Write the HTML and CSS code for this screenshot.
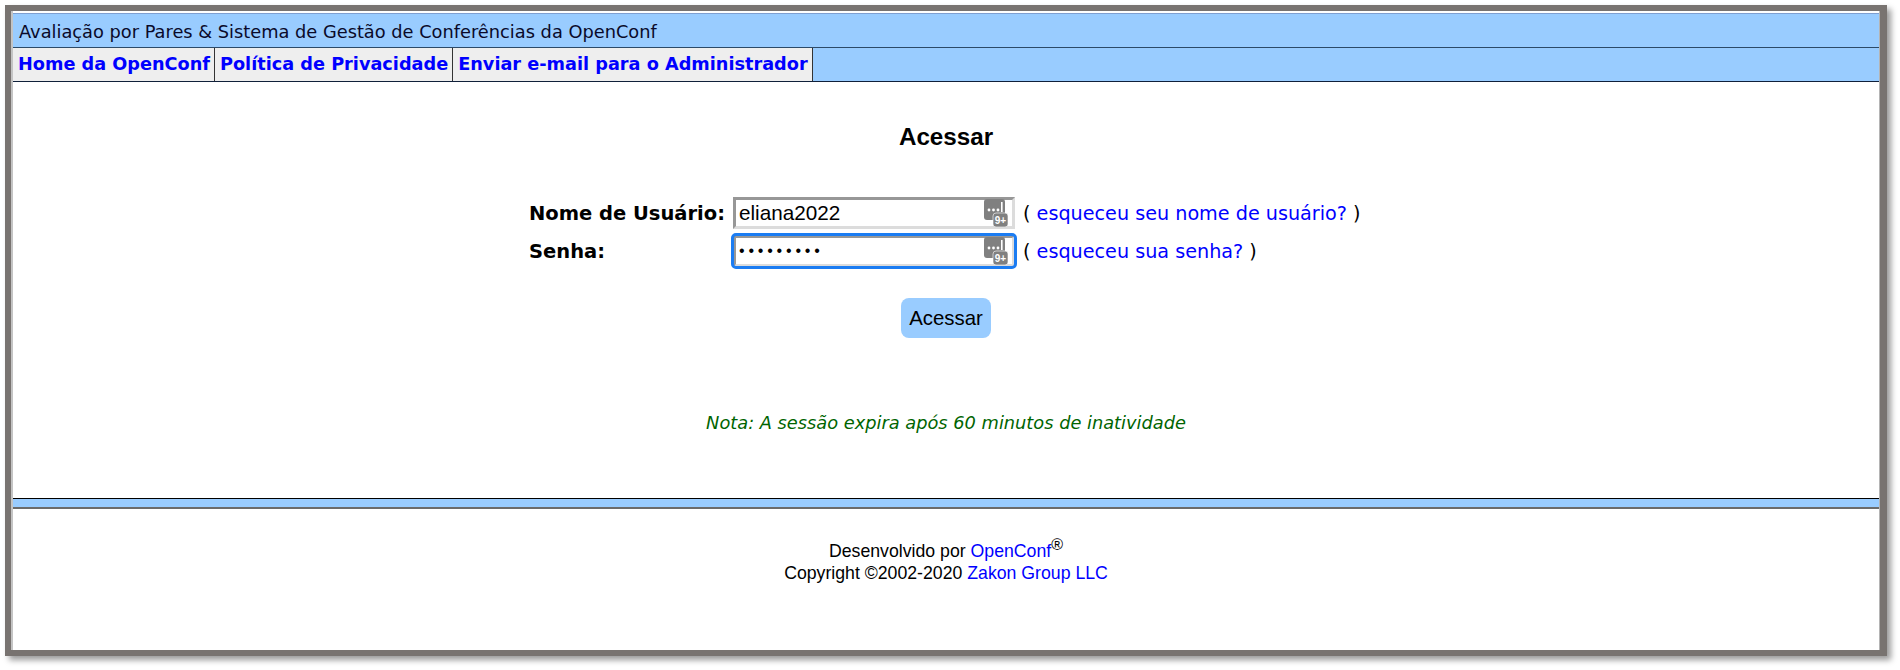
FILE: index.html
```html
<!DOCTYPE html>
<html lang="pt">
<head>
    <meta charset="UTF-8">
    <title>Avaliação por Pares &amp; Sistema de Gestão de Conferências da OpenConf</title>
    <link rel="stylesheet" href="styles.css">
</head>
<body>

<div class="window">
    <div class="site-title">Avaliação por Pares &amp; Sistema de Gestão de Conferências da OpenConf</div>
    <div class="site-nav">
        <a class="nav-item" href="#">Home da OpenConf</a>
        <a class="nav-item" href="#">Política de Privacidade</a>
        <a class="nav-item" href="#">Enviar e-mail para o Administrador</a>
    </div>

    <div class="content">
        <h1>Acessar</h1>
        <form class="login-form">
            <label class="field-label" for="user">Nome de Usuário:</label>
            <div class="input-box">
                <input id="user" class="text-input" type="text" value="eliana2022">
                <svg class="pass-icon" viewBox="0 0 24 28">
                    <rect x="0" y="0" width="21" height="21" rx="3" fill="#808080"/>
                    <circle cx="5" cy="11" r="1.4" fill="#fff"/>
                    <circle cx="9.5" cy="11" r="1.4" fill="#fff"/>
                    <circle cx="14" cy="11" r="1.4" fill="#fff"/>
                    <rect x="17" y="3" width="1.6" height="10" fill="#fff"/>
                    <rect x="9" y="14" width="15" height="14" rx="3" fill="#808080" stroke="#fff" stroke-width="0.6"/>
                    <text x="16.5" y="25" font-family="Liberation Sans, sans-serif" font-size="10" font-weight="700" fill="#fff" text-anchor="middle">9+</text>
                </svg>
            </div>
            <div class="field-note">( <a href="#">esqueceu seu nome de usuário?</a> )</div>

            <label class="field-label" for="pass">Senha:</label>
            <div class="input-box focused">
                <input id="pass" class="text-input password" type="password" value="abcdefghi">
                <svg class="pass-icon" viewBox="0 0 24 28">
                    <rect x="0" y="0" width="21" height="21" rx="3" fill="#808080"/>
                    <circle cx="5" cy="11" r="1.4" fill="#fff"/>
                    <circle cx="9.5" cy="11" r="1.4" fill="#fff"/>
                    <circle cx="14" cy="11" r="1.4" fill="#fff"/>
                    <rect x="17" y="3" width="1.6" height="10" fill="#fff"/>
                    <rect x="9" y="14" width="15" height="14" rx="3" fill="#808080" stroke="#fff" stroke-width="0.6"/>
                    <text x="16.5" y="25" font-family="Liberation Sans, sans-serif" font-size="10" font-weight="700" fill="#fff" text-anchor="middle">9+</text>
                </svg>
            </div>
            <div class="field-note">( <a href="#">esqueceu sua senha?</a> )</div>
        </form>
        <div class="submit-row"><button class="submit" type="button">Acessar</button></div>
        <p class="note">Nota: A sessão expira após 60 minutos de inatividade</p>
    </div>

    <div class="footer-bar"></div>
    <div class="footer">
        Desenvolvido por <a href="#">OpenConf</a><sup>®</sup><br>
        Copyright ©2002-2020 <a href="#">Zakon Group LLC</a>
    </div>
</div>

</body>
</html>
```

FILE: styles.css
```css
html, body {
    margin: 0;
    padding: 0;
    background-color: #fff;
}

body {
    height: 670px;
    overflow: hidden;
    font-family: "DejaVu Sans", sans-serif;
    font-size: 16px;
    color: #000;
}

a {
    color: #00f;
    text-decoration: none;
}

.window {
    box-sizing: border-box;
    width: 1882px;
    height: 651px;
    margin: 5px 0 0 5px;
    border: solid #787370;
    border-width: 6px 7px 6px 6px;
    background-color: #fff;
    padding: 2px 1px 0 2px;
    box-shadow: 4px 4px 6px rgba(0, 0, 0, 0.4), inset 2px 0 #c4c4c4, inset -1px 0 #b4b4b4;
}

.site-title {
    box-sizing: border-box;
    height: 35px;
    padding-left: 6px;
    line-height: 35px;
    background-color: #99ccff;
    border-top: 1px solid #7f9fd0;
    border-bottom: 1px solid #2c4a68;
    font-size: 17.8px;
    color: #0a0a2a;
}

.site-nav {
    display: flex;
    box-sizing: border-box;
    height: 34px;
    background-color: #99ccff;
    border-bottom: 1px solid #10203a;
}

.nav-item {
    padding: 0 4px 0 5px;
    line-height: 33px;
    background-color: #eeeeee;
    border-right: 1px solid #333;
    font-size: 17.7px;
    font-weight: bold;
}

.content {
    box-sizing: border-box;
    height: 416px;
}

h1 {
    margin: 0;
    padding-top: 41px;
    line-height: 28px;
    font-family: "Liberation Sans", sans-serif;
    font-size: 24.2px;
    font-weight: bold;
    text-align: center;
}

.login-form {
    display: grid;
    grid-template-columns: 204px 282px auto;
    grid-auto-rows: 38px;
    align-items: center;
    margin: 43px 0 0 516px;
}

.field-label {
    font-size: 19.5px;
    font-weight: bold;
}

.input-box {
    position: relative;
    box-sizing: border-box;
    width: 282px;
    height: 32px;
}

.input-box.focused {
    outline: 3px solid #1b7cf2;
    outline-offset: -1px;
    border-radius: 3px;
}

.text-input {
    box-sizing: border-box;
    width: 100%;
    height: 100%;
    padding: 0 36px 0 3px;
    border: 3px solid;
    border-color: #979797 #dcdcdc #dcdcdc #979797;
    outline: none;
    font-family: "Liberation Sans", sans-serif;
    font-size: 20.7px;
}

.text-input.password {
    font-size: 16px;
    letter-spacing: 3.8px;
}

.pass-icon {
    position: absolute;
    top: 2px;
    right: 7px;
    width: 24px;
    height: 28px;
}

.field-note {
    padding-left: 8px;
    font-size: 19.2px;
}

.submit-row {
    margin-top: 28px;
    text-align: center;
}

.submit {
    width: 90px;
    height: 40px;
    padding: 0;
    border: none;
    border-radius: 8px;
    background-color: #99ccff;
    font-family: "Liberation Sans", sans-serif;
    font-size: 20.4px;
    color: #000;
}

.note {
    margin: 74px 0 0;
    font-size: 17.8px;
    font-style: italic;
    text-align: center;
    color: #006400;
}

.footer-bar {
    box-sizing: border-box;
    height: 11px;
    background-color: #99ccff;
    border-top: 1px solid #000;
    border-bottom: 2px solid #6b6b6b;
}

.footer {
    padding-top: 31px;
    line-height: 22px;
    font-family: "Liberation Sans", sans-serif;
    font-size: 17.7px;
    text-align: center;
}

.footer sup {
    font-size: 16px;
    line-height: 0;
}
```
